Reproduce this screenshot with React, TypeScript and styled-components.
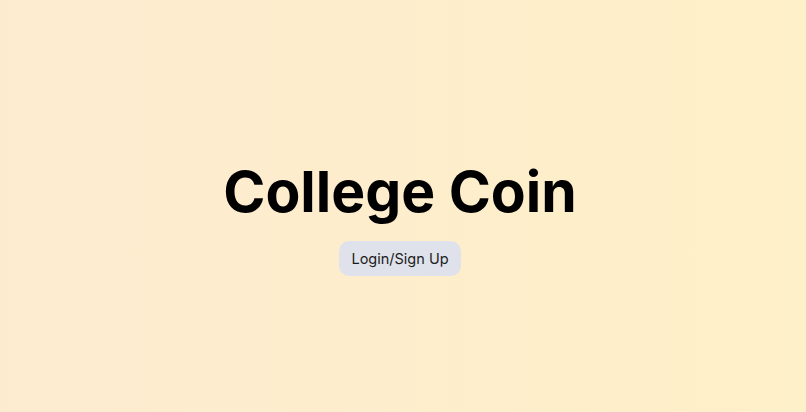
import React from "react"
import styled, { createGlobalStyle } from "styled-components"

const GlobalStyle = createGlobalStyle`
  html, body {
    margin: 0;
    padding: 0;
  }
  body {
    font-family: Inter, "Noto Sans", sans-serif;
  }
`

const Page = styled.main`
  min-height: 100vh;
  box-sizing: border-box;
  padding: 22px 6px 0 0;
  display: flex;
  flex-direction: column;
  align-items: center;
  justify-content: center;
  gap: 15px;
  background: linear-gradient(to right, #fdebd0, #fef0c8);
`

const Title = styled.h1`
  margin: 0;
  font-size: 57px;
  font-weight: 700;
  line-height: 1.2;
  letter-spacing: 0;
  color: #000;
`

const AuthButton = styled.button`
  border: none;
  border-radius: 10px;
  padding: 0 12px;
  height: 35px;
  background: #dfe2eb;
  color: #1c1c1c;
  font-family: Inter, "Noto Sans", sans-serif;
  font-size: 14.5px;
  cursor: pointer;
`

const App = () => {
  return (
    <>
      <GlobalStyle />
      <Page>
        <Title>College Coin</Title>
        <AuthButton>Login/Sign Up</AuthButton>
      </Page>
    </>
  )
}

export default App
